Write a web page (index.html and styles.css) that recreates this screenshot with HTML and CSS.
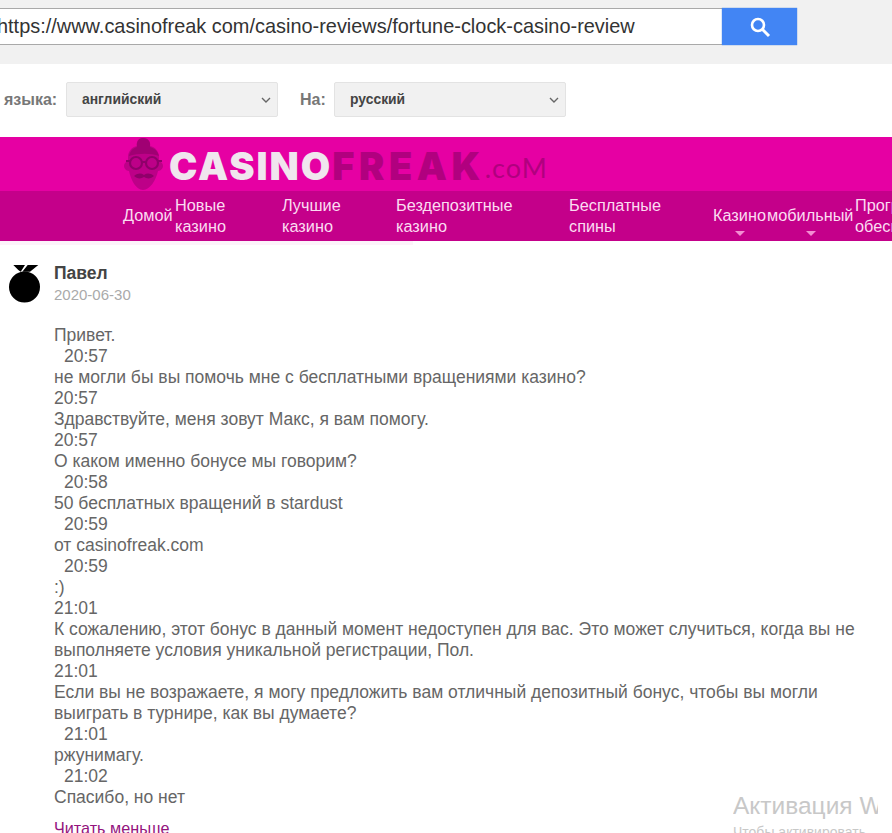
FILE: index.html
```html
<!DOCTYPE html>
<html lang="ru">
<head>
<meta charset="utf-8">
<title>Casinofreak</title>
<link rel="stylesheet" href="styles.css">
</head>
<body>
<header class="topbar">
  <div class="urlbox"><span class="urltext">https://www.casinofreak com/casino-reviews/fortune-clock-casino-review</span></div>
  <button class="searchbtn" aria-label="Поиск">
    <svg width="24" height="24" viewBox="0 0 24 24"><circle cx="10" cy="10" r="6" fill="none" stroke="#fff" stroke-width="2.6"/><path d="M14.5 14.5L21 21" stroke="#fff" stroke-width="3" fill="none"/></svg>
  </button>
</header>
<section class="langrow">
  <span class="langlabel first">языка:</span>
  <div class="select sel1"><span class="seltext">английский</span><svg class="chev" width="10" height="6" viewBox="0 0 10 6"><path d="M1 1l4 4 4-4" fill="none" stroke="#666" stroke-width="1.4"/></svg></div>
  <span class="langlabel second">На:</span>
  <div class="select sel2"><span class="seltext">русский</span><svg class="chev" width="10" height="6" viewBox="0 0 10 6"><path d="M1 1l4 4 4-4" fill="none" stroke="#666" stroke-width="1.4"/></svg></div>
</section>
<section class="banner">
  <svg class="face" width="42" height="54" viewBox="0 0 42 54">
    <path d="M14 9c-1-4 1-8 6-8s8 3 7 8c5 1 9 5 9 11v4c3 1 4 3 4 5s-2 5-5 5c-2 9-8 19-15 19S8 43 6 34c-3 0-5-3-5-5s1-4 4-5v-4c0-6 4-10 9-11z" fill="#bd0088"/>
    <path d="M14 10c-1-4 1-9 6-9s8 4 7 9c4 1 8 4 9 9-8-3-20-3-30 0 1-5 4-8 8-9z" fill="#a00073"/>
    <g fill="none" stroke="#8f006a" stroke-width="2.2">
      <circle cx="13" cy="26" r="6"/><circle cx="29" cy="26" r="6"/><path d="M19 25h4M3 24h4M35 24h4"/>
    </g>
    <path d="M11 39c4-3 7-3 10-1 3-2 6-2 10 1-3 3-7 3-10 1-3 2-7 2-10-1z" fill="#8f006a"/>
  </svg>
  <span class="logo-a">CASINO</span><span class="logo-b">FREAK</span><span class="logo-c">.coM</span>
</section>
<nav class="nav">
  <a class="item single w-home">Домой</a>
  <a class="item w-new">Новые<br>казино</a>
  <a class="item w-best">Лучшие<br>казино</a>
  <a class="item w-nodep">Бездепозитные<br>казино</a>
  <a class="item w-free">Бесплатные<br>спины</a>
  <a class="item single drop w-cas">Казино</a>
  <a class="item single drop w-mob">мобильный</a>
  <a class="item w-soft">Программное<br>обеспечение</a>
</nav>
<div class="navshadow"></div>
<article class="review">
  <svg class="avatar" width="33" height="38" viewBox="0 0 33 38">
    <path d="M5.3 0H17l-4.3 6.7L10.300 5zM19.700 0h10.600L22 6.700h-7.700z" fill="#000"/>
    <circle cx="16.500" cy="22" r="15.500" fill="#000"/>
  </svg>
  <div class="body">
    <div class="author">Павел</div>
    <div class="date">2020-06-30</div>
    <div class="message">
      <p>Привет.</p>
      <p class="t">20:57</p>
      <p>не могли бы вы помочь мне с бесплатными вращениями казино?</p>
      <p>20:57</p>
      <p>Здравствуйте, меня зовут Макс, я вам помогу.</p>
      <p>20:57</p>
      <p>О каком именно бонусе мы говорим?</p>
      <p class="t">20:58</p>
      <p>50 бесплатных вращений в stardust</p>
      <p class="t">20:59</p>
      <p>от casinofreak.com</p>
      <p class="t">20:59</p>
      <p>:)</p>
      <p>21:01</p>
      <p>К сожалению, этот бонус в данный момент недоступен для вас. Это может случиться, когда вы не выполняете условия уникальной регистрации, Пол.</p>
      <p>21:01</p>
      <p>Если вы не возражаете, я могу предложить вам отличный депозитный бонус, чтобы вы могли выиграть в турнире, как вы думаете?</p>
      <p class="t">21:01</p>
      <p>ржунимагу.</p>
      <p class="t">21:02</p>
      <p>Спасибо, но нет</p>
    </div>
    <a class="more">Читать меньше</a>
  </div>
</article>
<aside class="watermark">
  <div class="wm1">Активация W</div>
  <div class="wm2">Чтобы активировать</div>
</aside>
</body>
</html>
```
FILE: styles.css
```css
html, body { margin: 0; padding: 0; width: 892px; height: 833px; overflow: hidden; background: #fff; }
body { font-family: "Liberation Sans", Arial, sans-serif; position: relative; }
.topbar { height: 56px; padding-top: 8px; background: #f1f1f1; display: flex; align-items: flex-start; }
.urlbox { width: 722px; height: 35px; background: #fff; border-top: 1px solid #a9a9a9; border-bottom: 1px solid #a9a9a9; overflow: hidden; white-space: nowrap; line-height: 35px; font-size: 19.93px; color: #333; }
.urltext { display: block; margin-left: -3px; }
.searchbtn { width: 75px; height: 37px; border: 0; padding: 0; background: #4285f4; display: flex; align-items: center; justify-content: center; box-shadow: 0 0 1px #2a6fd8; }
.langrow { height: 73px; padding-bottom: 2px; box-sizing: border-box; display: flex; align-items: center; }
.langlabel { font-size: 16px; font-weight: 700; color: #777; }
.langlabel.first { margin-left: 4px; width: 62px; }
.langlabel.second { margin-left: 22px; width: 34px; }
.select { height: 35px; box-sizing: border-box; border: 1px solid #e3e3e3; border-radius: 2px; background: #f1f1f1; display: flex; align-items: center; justify-content: space-between; padding: 0 6px 0 15px; font-size: 13.9px; font-weight: 700; color: #444; }
.seltext { margin-bottom: 2px; }
.sel1 { width: 212px; }
.sel2 { width: 232px; }
.banner { height: 54px; background: #e600a3; display: flex; align-items: center; padding-left: 123px; box-sizing: border-box; white-space: nowrap; }
.face { margin-right: 4px; flex: none; }
.logo-a, .logo-b { font-family: Inter, sans-serif; font-weight: 900; font-size: 38px; line-height: 1; margin-top: 4px; }
.logo-a { color: #f0e6ee; letter-spacing: 2px; }
.logo-b { color: #b1007f; letter-spacing: 4.5px; }
.logo-c { font-family: Lato, sans-serif; font-size: 27px; color: #b1007f; margin-top: 6px; letter-spacing: 1px; }
.nav { height: 50px; background: #c4008a; display: flex; padding-left: 123px; box-sizing: border-box; white-space: nowrap; overflow: hidden; font-size: 16.3px; line-height: 21px; color: #fbdcf1; }
.item { display: block; padding-top: 4px; flex: none; }
.item.single { padding-top: 14px; position: relative; }
.item.drop::after { content: ""; position: absolute; left: 50%; margin-left: -5px; top: 40px; border: 5px solid transparent; border-top: 5px solid #f28fd2; border-bottom: 0; }
.w-home { width: 52px; }
.w-new { width: 107px; }
.w-best { width: 114px; }
.w-nodep { width: 173px; }
.w-free { width: 144px; }
.w-cas { width: 54px; }
.w-mob { width: 88px; }
.navshadow { height: 4px; width: 413px; background: #fdf3fa; }
.review { display: flex; padding: 20px 0 0 8px; }
.avatar { flex: none; margin-right: 13px; }
.body { width: 808px; margin-top: -2px; }
.author { font-size: 17.5px; line-height: 21px; font-weight: 700; color: #444; }
.date { font-size: 15px; line-height: 22px; color: #aaa; }
.message { margin-top: 19px; font-size: 17.5px; line-height: 21px; color: #666; }
.message p { margin: 0; }
.message .t { padding-left: 10px; }
.more { display: block; margin-top: 10px; font-size: 16.2px; line-height: 21px; color: #94147e; }
.watermark { position: absolute; left: 733px; top: 792px; white-space: nowrap; color: #c8c8c8; width: 145px; overflow: hidden; }
.wm1 { font-size: 24.5px; line-height: 28px; }
.wm2 { font-size: 14px; line-height: 20px; margin-top: 2px; }
```
